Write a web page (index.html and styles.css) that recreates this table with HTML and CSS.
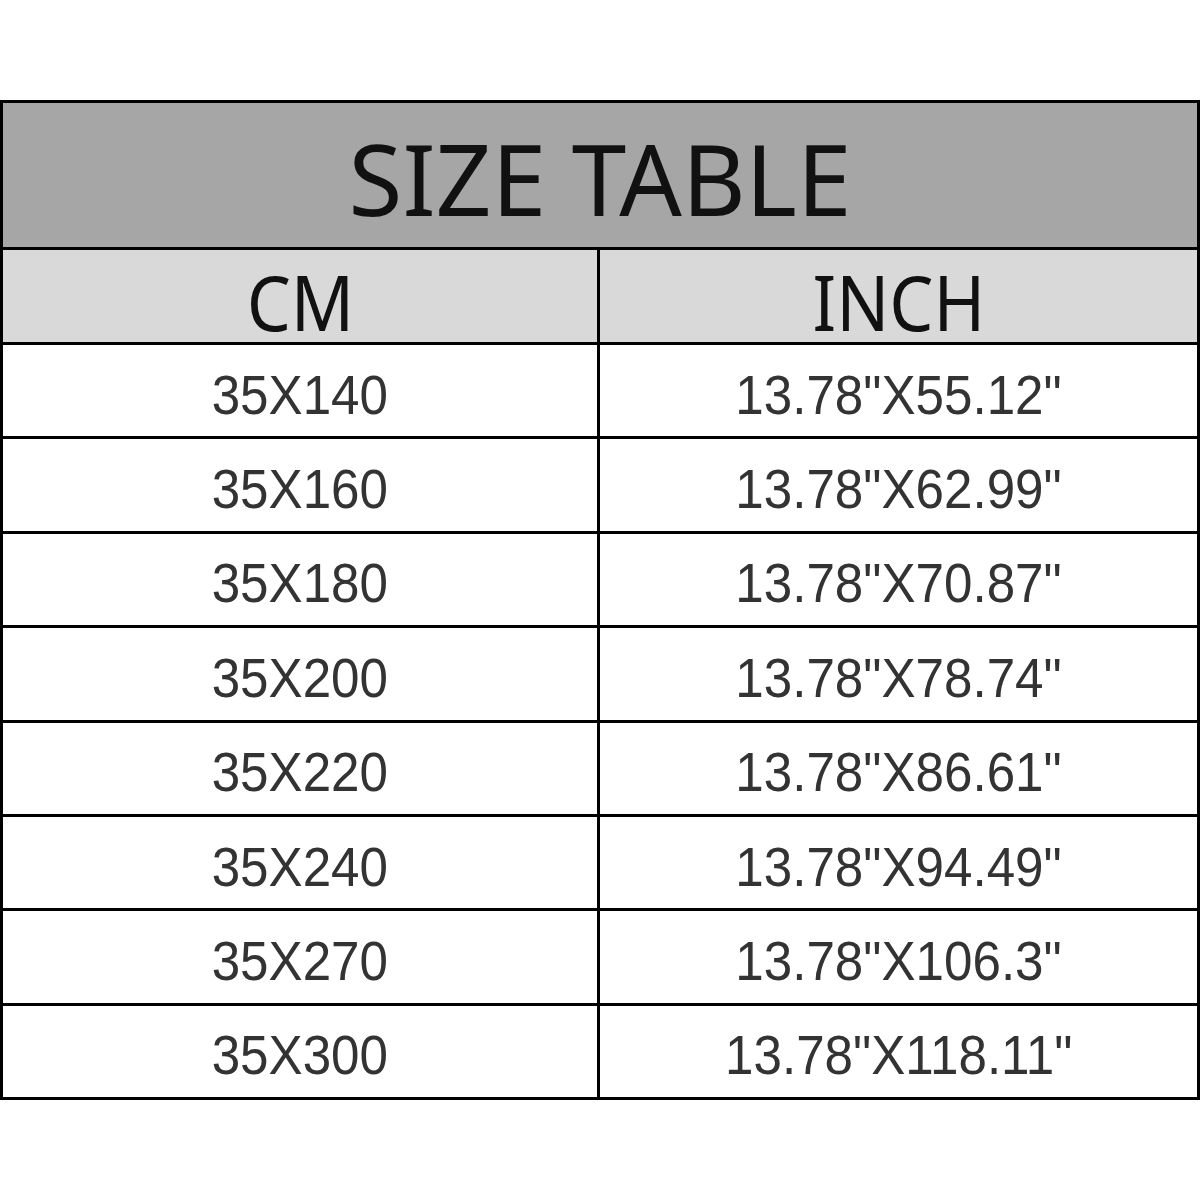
FILE: index.html
```html
<!DOCTYPE html>
<html>
<head>
<meta charset="utf-8">
<link rel="stylesheet" href="styles.css">
</head>
<body>
<div class="table">
  <div class="title">SIZE TABLE</div>
  <div class="head"><span>CM</span></div>
  <div class="head"><span>INCH</span></div>
  <div class="cell"><span>35X140</span></div><div class="cell"><span>13.78"X55.12"</span></div>
  <div class="cell"><span>35X160</span></div><div class="cell"><span>13.78"X62.99"</span></div>
  <div class="cell"><span>35X180</span></div><div class="cell"><span>13.78"X70.87"</span></div>
  <div class="cell"><span>35X200</span></div><div class="cell"><span>13.78"X78.74"</span></div>
  <div class="cell"><span>35X220</span></div><div class="cell"><span>13.78"X86.61"</span></div>
  <div class="cell"><span>35X240</span></div><div class="cell"><span>13.78"X94.49"</span></div>
  <div class="cell"><span>35X270</span></div><div class="cell"><span>13.78"X106.3"</span></div>
  <div class="cell"><span>35X300</span></div><div class="cell"><span>13.78"X118.11"</span></div>
</div>
</body>
</html>
```
FILE: styles.css
```css
html, body {
  margin: 0;
  padding: 0;
  background: #ffffff;
}
body {
  padding-top: 100px;
}
.table {
  width: 1200px;
  box-sizing: border-box;
  display: grid;
  grid-template-columns: 594px 1fr;
  grid-template-rows: 144px 92px repeat(8, 91.375px);
  gap: 3px;
  padding: 3px;
  background: #000;
}
.title {
  grid-column: 1 / 3;
  background: #a6a6a6;
  color: #111;
  font-family: "Noto Sans", sans-serif;
  font-size: 98px;
  display: flex;
  align-items: center;
  justify-content: center;
  line-height: 1;
  padding-top: 6px;
  box-sizing: border-box;
}
.head {
  background: #d9d9d9;
  color: #111;
  font-family: "Noto Sans", sans-serif;
  font-size: 76px;
  display: flex;
  align-items: center;
  justify-content: center;
  line-height: 1;
  padding-top: 12px;
  box-sizing: border-box;
}
.head span {
  display: inline-block;
  transform: scaleX(0.92);
}
.cell {
  background: #fff;
  color: #333;
  font-family: "Liberation Sans", Arial, sans-serif;
  font-size: 55px;
  display: flex;
  align-items: center;
  justify-content: center;
  line-height: 1;
  padding-top: 9px;
  box-sizing: border-box;
}
.cell span {
  display: inline-block;
  transform: scaleX(0.93);
}
```
